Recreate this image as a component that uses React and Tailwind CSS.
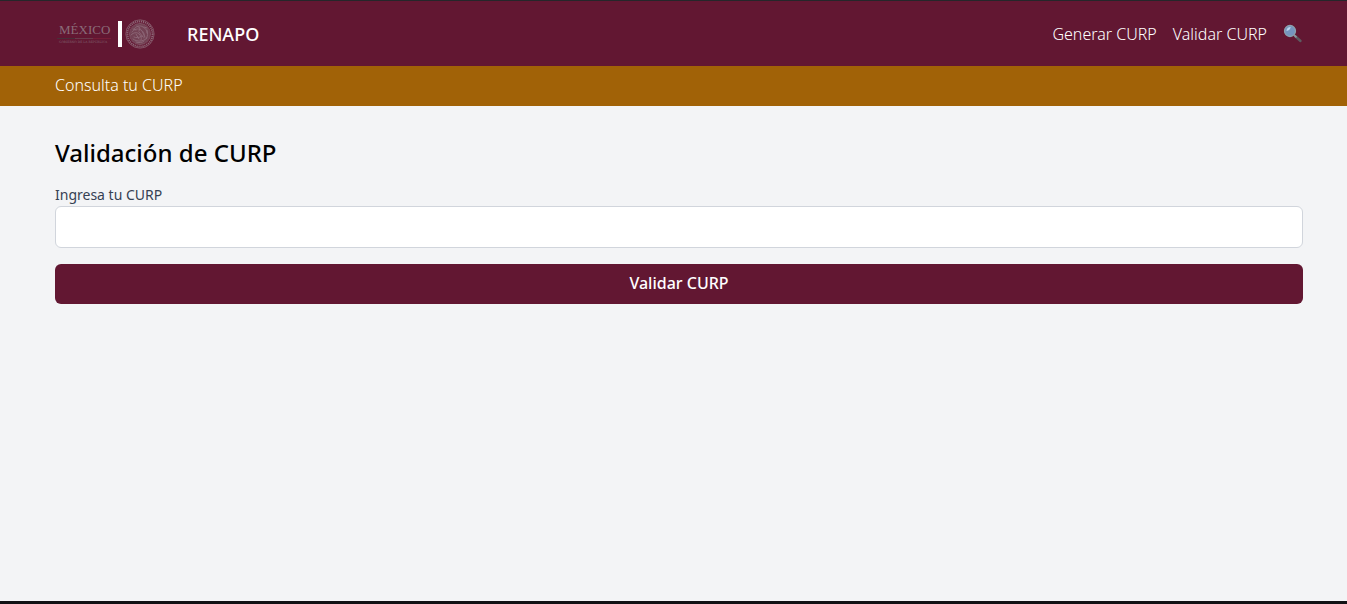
import React from "react";

function Logo() {
  return (
    <svg width="100" height="33" viewBox="0 0 100 33" role="img" aria-label="México, Gobierno de la República" className="shrink-0">
      <text x="4" y="17" fontSize="13" fontFamily="'Liberation Serif', serif" fill="#8a6b78">MÉXICO</text>
      <path d="M2 21.5h18" stroke="#3f3a3c" strokeWidth="0.7" />
      <path d="M20 21.5h18" stroke="#6f4a58" strokeWidth="0.7" />
      <path d="M38 21.5h18" stroke="#80203a" strokeWidth="0.7" />
      <text x="4" y="26" fontSize="3" fontFamily="'DejaVu Serif', serif" fill="#80606e">GOBIERNO DE LA REPÚBLICA</text>
      <rect x="63" y="4" width="4" height="26" fill="#ffffff" />
      <circle cx="85" cy="17" r="10.4" fill="#734254" />
      <g fill="none" stroke="#8c6676">
        <circle cx="85" cy="17" r="14.2" strokeWidth="0.7" />
        <circle cx="85" cy="17" r="12.6" strokeWidth="2" strokeDasharray="1.2 0.8" />
        <circle cx="85" cy="17" r="10.6" strokeWidth="0.6" />
        <g strokeWidth="1" strokeLinecap="round">
          <path d="M79 12c2-3 6-4 9-2 2 1 4 3 4 6M77 15c2-3 6-4 9-2 3 2 4 5 3 8M76 18c3-3 6-3 8-1 2 2 3 4 2 6" />
          <path d="M82 9l3 2-1 3M79 20c2 1 5 1 8-1M78 22c4 3 10 3 14-1M81 25c3 1 6 1 8-1M92 13c1 3 1 6-1 9M89 10l3 1M81 13l-3-1" />
          <path d="M84 15l4 5M87 14l3 6M81 17l3 5" />
        </g>
      </g>
    </svg>
  );
}

function SearchIcon() {
  return (
    <svg width="20" height="20" viewBox="0 0 20 20" aria-hidden="true">
      <path d="M12 12l5.5 5" stroke="#5d5b60" strokeWidth="2.4" strokeLinecap="round" />
      <path d="M11 11l2.5 2.3" stroke="#8a969d" strokeWidth="1.8" />
      <circle cx="7" cy="7" r="5.5" fill="#7595bf" stroke="#8ba1ae" strokeWidth="1.3" />
      <path d="M3.5 7c0-2.4 1.8-4 4.2-4-.4 2.4-1.8 3.6-4.2 4z" fill="#bdd7ed" />
    </svg>
  );
}

export default function App() {
  return (
    <div className="flex min-h-screen flex-col border-t border-b-3 border-t-[#25262a] border-b-[#111114] bg-gray-100 font-['Noto_Sans',sans-serif] text-base text-black">
      <header className="bg-[#621732] pl-[11px] text-white">
        <div className="mx-auto flex max-w-7xl items-center justify-between px-4 py-4">
          <div className="flex items-center gap-8">
            <Logo />
            <span className="text-lg leading-6 font-medium">RENAPO</span>
          </div>
          <nav className="flex items-center gap-4">
            <a href="#generar" className="font-light">Generar CURP</a>
            <a href="#validar" className="font-light">Validar CURP</a>
            <button type="button" aria-label="Buscar">
              <SearchIcon />
            </button>
          </nav>
        </div>
      </header>
      <div className="bg-[#a16207] pl-[11px] text-white">
        <div className="mx-auto max-w-7xl px-4 pt-[7px] pb-[9px]">
          <a href="#consulta" className="block font-light">Consulta tu CURP</a>
        </div>
      </div>
      <main className="grow pl-[11px]">
        <div className="mx-auto max-w-7xl px-4 pt-[31px] pb-8">
          <h1 className="mb-4 text-2xl font-medium">Validación de CURP</h1>
          <form className="flex flex-col gap-4">
            <div>
              <label htmlFor="curp" className="mb-px block text-sm text-gray-700">Ingresa tu CURP</label>
              <input id="curp" type="text" className="block h-[42px] w-full rounded-md border border-gray-300 bg-white px-3" />
            </div>
            <button type="button" className="w-full rounded-md bg-[#621732] px-4 pt-[7px] pb-[9px] font-medium text-white">Validar CURP</button>
          </form>
        </div>
      </main>
    </div>
  );
}
